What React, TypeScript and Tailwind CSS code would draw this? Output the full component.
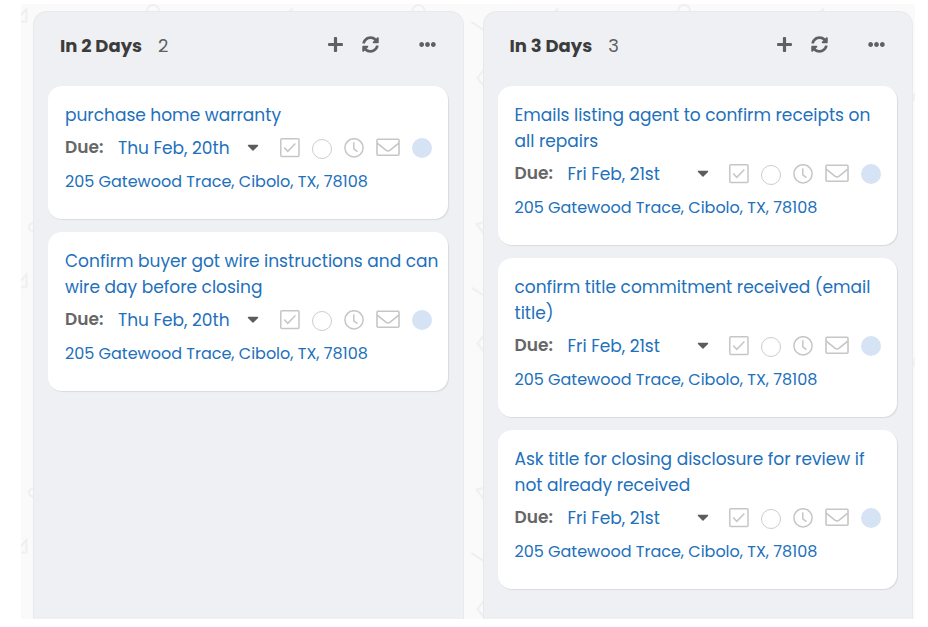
import { FaCaretDown, FaEllipsisH, FaPlus, FaSyncAlt } from "react-icons/fa";

interface Task {
  id: string;
  title: string;
  due: string;
  address: string;
}

interface BoardColumn {
  title: string;
  tasks: Task[];
}

const ADDRESS = "205 Gatewood Trace, Cibolo, TX, 78108";

const columns: BoardColumn[] = [
  {
    title: "In 2 Days",
    tasks: [
      { id: "warranty", title: "purchase home warranty", due: "Thu Feb, 20th", address: ADDRESS },
      {
        id: "wire",
        title: "Confirm buyer got wire instructions and can wire day before closing",
        due: "Thu Feb, 20th",
        address: ADDRESS,
      },
    ],
  },
  {
    title: "In 3 Days",
    tasks: [
      {
        id: "repairs",
        title: "Emails listing agent to confirm receipts on all repairs",
        due: "Fri Feb, 21st",
        address: ADDRESS,
      },
      {
        id: "commitment",
        title: "confirm title commitment received (email title)",
        due: "Fri Feb, 21st",
        address: ADDRESS,
      },
      {
        id: "disclosure",
        title: "Ask title for closing disclosure for review if not already received",
        due: "Fri Feb, 21st",
        address: ADDRESS,
      },
    ],
  },
];

function CheckIcon() {
  return (
    <svg viewBox="0 0 20 20" className="h-5 w-5" fill="none" stroke="currentColor" strokeWidth="1.5">
      <rect x="0.8" y="0.8" width="18.2" height="17.6" rx="1" />
      <path d="M4.2 9.6l3.6 3.7 7.6-7.8" />
    </svg>
  );
}

function ClockIcon() {
  return (
    <svg viewBox="0 0 20 20" className="h-5 w-5" fill="none" stroke="currentColor" strokeWidth="1.5">
      <circle cx="10" cy="9.8" r="9.1" />
      <path d="M9.8 4.2v6.6l3.6 2.8" />
    </svg>
  );
}

function MailIcon() {
  return (
    <svg viewBox="0 0 24 20" className="h-5 w-6" fill="none" stroke="currentColor" strokeWidth="1.6">
      <rect x="1" y="1.2" width="22" height="16" rx="1" />
      <path d="M1.2 5.2l9 7.2q1.8 1.3 3.6 0l9-7.2" />
    </svg>
  );
}

// Faint doodles that repeat behind the columns
function BoardPattern() {
  return (
    <svg className="absolute inset-0 h-full w-full" aria-hidden="true">
      <defs>
        <pattern id="doodles" width="265.5" height="265.5" patternUnits="userSpaceOnUse">
          <g fill="none" stroke="#efefef" strokeWidth="2">
            <path d="M-6 17.5L5.5 5v12.5z" />
            <circle cx="132" cy="7" r="6" />
            <circle cx="12" cy="223" r="4" />
            <path d="M185 18l14 9" />
            <path d="M198 65l-7 9 7 9" />
            <path d="M190 220l10-2-4 10z" />
            <circle cx="100" cy="93" r="4" />
          </g>
        </pattern>
      </defs>
      <rect width="100%" height="100%" fill="url(#doodles)" />
    </svg>
  );
}

function TaskCard({ task }: { task: Task }) {
  const selectId = `due-${task.id}`;

  return (
    <article className="rounded-[14px] bg-white pt-4 pr-4 pb-6 pl-[17px] text-[#2170bc] shadow-[1px_1px_1px_#d9dade]">
      <a href="#" className="-mr-2.5 block text-[17px] leading-[26px]">
        {task.title}
      </a>
      <div className="mb-px flex h-10 items-center">
        <label htmlFor={selectId} className="w-[53px] shrink-0 text-[17px] font-semibold text-[#666]">
          Due:
        </label>
        <div className="relative w-[140px] shrink-0">
          <select
            id={selectId}
            defaultValue={task.due}
            className="block w-full appearance-none bg-transparent text-[17px] leading-[26px] outline-none"
          >
            <option>{task.due}</option>
          </select>
          <FaCaretDown className="pointer-events-none absolute top-[3px] -right-1 h-[18px] w-[18px] text-[#5c5c5c]" />
        </div>
        <div className="ml-auto flex items-center gap-3 text-[#c6c6c6]">
          <button aria-label="Mark complete">
            <CheckIcon />
          </button>
          <button aria-label="Set status" className="mt-0.5 h-5 w-5 rounded-full border border-[#cacdd0]" />
          <button aria-label="Set reminder">
            <ClockIcon />
          </button>
          <button aria-label="Send email">
            <MailIcon />
          </button>
          <button aria-label="Assignee" className="h-5 w-5 rounded-full bg-[#d5e3f5]" />
        </div>
      </div>
      <a href="#" className="block text-base leading-[26px]">
        {task.address}
      </a>
    </article>
  );
}

function Column({ column }: { column: BoardColumn }) {
  return (
    <section className="relative min-w-0 flex-1 rounded-t-[14px] border border-b-0 border-[#e8e9ea] bg-[#eff0f4] pr-[15px] pl-3.5">
      <header className="mb-1.5 flex h-[68px] items-center justify-between px-3 text-[#606060]">
        <div className="flex items-center gap-4">
          <h2 className="text-lg font-bold text-[#3c3c3c]">{column.title}</h2>
          <span className="text-lg">{column.tasks.length}</span>
        </div>
        <div className="flex items-center pb-[3px]">
          <button aria-label="Add task">
            <FaPlus className="h-[17px] w-[17px]" />
          </button>
          <button aria-label="Refresh" className="ml-[18px]">
            <FaSyncAlt className="h-[17px] w-[17px]" />
          </button>
          <button aria-label="More options" className="ml-10">
            <FaEllipsisH className="h-[17px] w-[17px]" />
          </button>
        </div>
      </header>
      <div className="flex flex-col gap-[13px] pb-[30px]">
        {column.tasks.map((task) => (
          <TaskCard key={task.id} task={task} />
        ))}
      </div>
    </section>
  );
}

export default function App() {
  return (
    <div className="flex min-h-screen bg-white pt-1 pr-[13px] pb-2 pl-[21px] font-[Poppins,Inter,sans-serif]">
      <main className="relative flex flex-1 gap-[19px] bg-[#fafafa] pt-[7px] pr-0.5 pl-3">
        <BoardPattern />
        {columns.map((column) => (
          <Column key={column.title} column={column} />
        ))}
      </main>
    </div>
  );
}
